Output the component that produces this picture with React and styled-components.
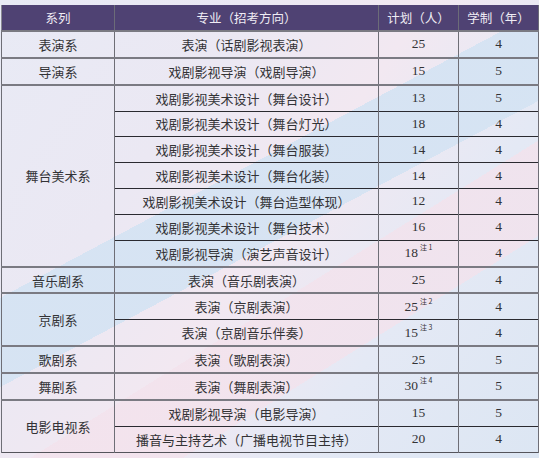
import React from "react";
import styled, { createGlobalStyle } from "styled-components";

const Global = createGlobalStyle`
  html, body { margin: 0; padding: 0; }
  body {
    width: 539px;
    height: 458px;
    overflow: hidden;
    font-family: "Liberation Serif", "Noto Sans CJK SC", serif;
    background:
      linear-gradient(152deg, transparent 0 40%, rgba(212,227,243,0.9) 40% 52%, transparent 52%),
      linear-gradient(148deg, transparent 0 60%, rgba(243,226,236,0.8) 60% 72%, transparent 72%),
      linear-gradient(125deg, #e8eaf5 0%, #ebe8f3 30%, #f2e8f1 50%, #e4e9f5 72%, #dce6f3 100%);
  }
`;

const Wrap = styled.div`
  padding: 5px 0 0 1px;
`;

const Table = styled.table`
  border-collapse: collapse;
  table-layout: fixed;
  width: 537px;
  border-left: 1px solid #8a8a92;
  border-right: 1.5px solid #55555c;
  border-bottom: 1.5px solid #55555c;
`;

const Th = styled.th`
  background: #4f4273;
  color: #efecf4;
  font-family: "Noto Sans CJK SC", sans-serif;
  font-weight: 400;
  font-size: 12.5px;
  height: 25px;
  padding: 0;
  text-align: center;
  border-right: 1.5px solid #6c6c78;
  border-bottom: 1.5px solid #6c6c78;
  white-space: nowrap;
`;

const Td = styled.td`
  height: 24.85px;
  padding: 0;
  text-align: center;
  color: #333336;
  font-size: ${(p) => (p.$num ? "13.5px" : "13px")};
  font-family: ${(p) =>
    p.$num ? `"Liberation Serif", serif` : `"Noto Sans CJK SC", sans-serif`};
  border-left: 1.5px solid #6e6e76;
  border-right: 1.5px solid #6e6e76;
  border-top: ${(p) => (p.$groupStart ? "2px solid #7a7a82" : "1px solid #2a2a30")};
  white-space: nowrap;
  background: transparent;
`;

const Sup = styled.sup`
  font-family: "Noto Sans CJK SC", sans-serif;
  font-size: 7px;
  vertical-align: 7px;
  margin-left: 2px;
  line-height: 0;
`;

const groups = [
  { dept: "表演系", rows: [["表演（话剧影视表演）", "25", "4"]] },
  { dept: "导演系", rows: [["戏剧影视导演（戏剧导演）", "15", "5"]] },
  {
    dept: "舞台美术系",
    rows: [
      ["戏剧影视美术设计（舞台设计）", "13", "5"],
      ["戏剧影视美术设计（舞台灯光）", "18", "4"],
      ["戏剧影视美术设计（舞台服装）", "14", "4"],
      ["戏剧影视美术设计（舞台化装）", "14", "4"],
      ["戏剧影视美术设计（舞台造型体现）", "12", "4"],
      ["戏剧影视美术设计（舞台技术）", "16", "4"],
      ["戏剧影视导演（演艺声音设计）", "18", "4", "注 1"],
    ],
  },
  { dept: "音乐剧系", rows: [["表演（音乐剧表演）", "25", "4"]] },
  {
    dept: "京剧系",
    rows: [
      ["表演（京剧表演）", "25", "4", "注 2"],
      ["表演（京剧音乐伴奏）", "15", "4", "注 3"],
    ],
  },
  { dept: "歌剧系", rows: [["表演（歌剧表演）", "25", "5"]] },
  { dept: "舞剧系", rows: [["表演（舞剧表演）", "30", "5", "注 4"]] },
  {
    dept: "电影电视系",
    rows: [
      ["戏剧影视导演（电影导演）", "15", "5"],
      ["播音与主持艺术（广播电视节目主持）", "20", "4"],
    ],
  },
];

export default function App() {
  return (
    <>
      <Global />
      <Wrap>
        <Table>
          <colgroup>
            <col style={{ width: 113 }} />
            <col style={{ width: 264 }} />
            <col style={{ width: 80 }} />
            <col style={{ width: 80 }} />
          </colgroup>
          <thead>
            <tr>
              <Th>系列</Th>
              <Th>专业（招考方向）</Th>
              <Th>计划（人）</Th>
              <Th>学制（年）</Th>
            </tr>
          </thead>
          <tbody>
            {groups.map((g) =>
              g.rows.map((r, i) => (
                <tr key={g.dept + i}>
                  {i === 0 && (
                    <Td rowSpan={g.rows.length} $groupStart>
                      {g.dept}
                    </Td>
                  )}
                  <Td $groupStart={i === 0}>{r[0]}</Td>
                  <Td $num $groupStart={i === 0}>
                    {r[1]}
                    {r[3] && <Sup>{r[3]}</Sup>}
                  </Td>
                  <Td $num $groupStart={i === 0}>
                    {r[2]}
                  </Td>
                </tr>
              ))
            )}
          </tbody>
        </Table>
      </Wrap>
    </>
  );
}
